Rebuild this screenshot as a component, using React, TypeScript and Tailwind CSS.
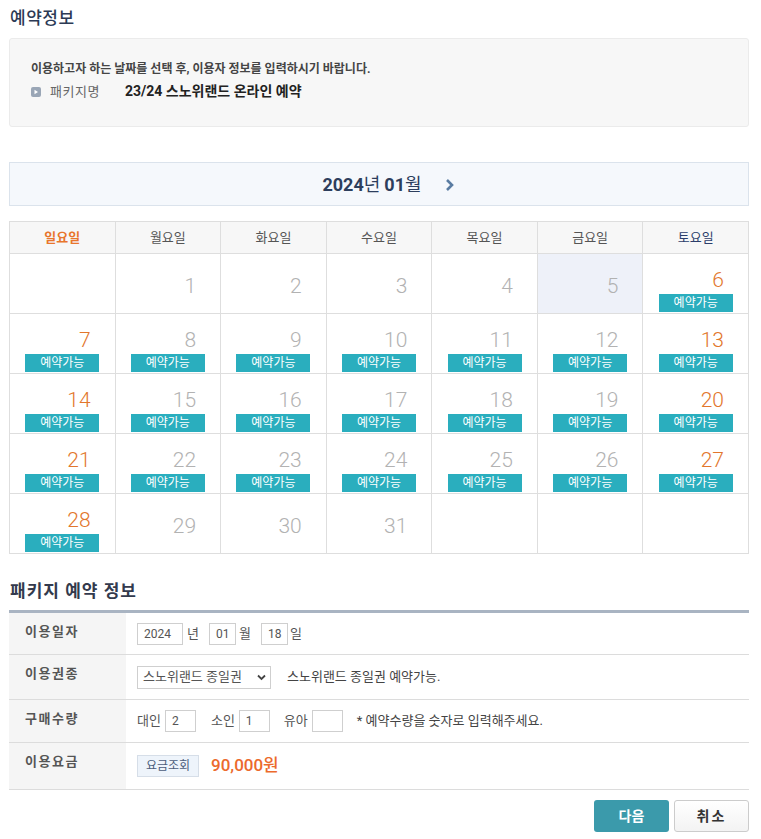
import React from 'react';

const FONT = "font-['Roboto','Noto_Sans_CJK_KR',sans-serif]";

const days = ['일요일', '월요일', '화요일', '수요일', '목요일', '금요일', '토요일'];

const weeks: (number | null)[][] = [
  [null, 1, 2, 3, 4, 5, 6],
  [7, 8, 9, 10, 11, 12, 13],
  [14, 15, 16, 17, 18, 19, 20],
  [21, 22, 23, 24, 25, 26, 27],
  [28, 29, 30, 31, null, null, null],
];

const isOpen = (d: number) => d >= 6 && d <= 28;

const DayCell: React.FC<{ day: number | null; col: number }> = ({ day, col }) => {
  const open = day !== null && isOpen(day);
  const weekend = col === 0 || col === 6;
  const bg = day === 5 ? 'bg-[#eef1f9]' : 'bg-white';
  return (
    <div className={`h-[60px] border-r border-b border-[#dedede] ${bg} flex flex-col ${open ? 'pt-[14px]' : 'pt-[20px]'}`}>
      {day !== null && (
        <div
          className={`text-right pr-[24px] text-[21px] leading-[24px] font-light ${
            open && weekend ? 'text-[#e2762c]' : 'text-[#b2b2b2]'
          }`}
        >
          {day}
        </div>
      )}
      {open && (
        <div className="mx-auto mt-[2px] w-[74px] h-[18px] bg-[#2aaebe] text-white text-[12px] leading-[18px] text-center">
          예약가능
        </div>
      )}
    </div>
  );
};

const Field: React.FC<{ w: string; value?: string }> = ({ w, value }) => (
  <div className={`${w} h-[22px] border border-[#cfcfcf] bg-white text-[12px] leading-[20px] text-[#555] pl-[6px]`}>
    {value}
  </div>
);

const Row: React.FC<{ label: string; h: string; children: React.ReactNode }> = ({ label, h, children }) => (
  <div className={`flex ${h} border-b border-[#dcdcdc]`}>
    <div className="w-[117px] shrink-0 bg-[#f5f5f5] pl-[16px] pt-[9px] text-[13px] font-bold text-[#555] tracking-[1.5px]">
      {label}
    </div>
    <div className="flex items-center pl-[11px] text-[13px] text-[#555]">{children}</div>
  </div>
);

const App: React.FC = () => {
  return (
    <div className={`${FONT} w-[761px] h-[839px] bg-white text-[#333] pl-[9px] overflow-hidden`}>
      <h2 className="pt-[6px] pl-[1px] text-[17px] leading-[24px] font-medium text-[#2c3a55] tracking-[0.5px]">예약정보</h2>

      <div className="mt-[8px] w-[740px] h-[89px] bg-[#f7f7f7] border border-[#ebebeb] rounded-[3px] pl-[21px] pt-[21px]">
        <p className="text-[12px] leading-[18px] font-bold text-[#454545]">
          이용하고자 하는 날짜를 선택 후, 이용자 정보를 입력하시기 바랍니다.
        </p>
        <div className="flex items-center mt-[3px]">
          <svg width="10" height="10" viewBox="0 0 10 10" className="mr-[9px]">
            <rect x="0" y="0" width="10" height="10" rx="2" fill="#9aa6b6" />
            <path d="M3.5 2.8 L7 5 L3.5 7.2 Z" fill="#ffffff" />
          </svg>
          <span className="text-[13px] text-[#666] w-[75px] tracking-[0.5px]">패키지명</span>
          <span className="text-[14px] font-bold text-[#222]">23/24 스노위랜드 온라인 예약</span>
        </div>
      </div>

      <div className="mt-[35px] w-[740px] h-[44px] bg-[#f5f8fc] border border-[#dbe3ec] flex items-center justify-center">
        <div className="flex items-center text-[18px] text-[#2d3e5c] ml-[20px]">
          <span className="font-bold">2024</span>
          <span className="mr-[4px]">년</span>
          <span className="font-bold">01</span>
          <span>월</span>
          <svg width="12" height="14" viewBox="0 0 12 14" className="ml-[22px] mt-[2px]">
            <path d="M3 2 L8 7 L3 12" stroke="#5a7ca2" strokeWidth="2.6" fill="none" />
          </svg>
        </div>
      </div>

      <div className="mt-[15px] w-[740px] border-l border-t border-[#dedede] grid grid-cols-7">
        {days.map((d, i) => (
          <div
            key={d}
            className={`h-[32px] border-r border-b border-[#dedede] bg-[#f7f7f7] flex items-center justify-center text-[13px] ${
              i === 0 ? 'text-[#e8762d] font-bold' : i === 6 ? 'text-[#2c3e6b]' : 'text-[#555]'
            }`}
          >
            {d}
          </div>
        ))}
        {weeks.map((w, wi) =>
          w.map((d, ci) => <DayCell key={`${wi}-${ci}`} day={d} col={ci} />)
        )}
      </div>

      <h3 className="mt-[25px] pl-[1px] text-[17px] leading-[24px] font-bold text-[#333a4d] tracking-[1px]">
        패키지 예약 정보
      </h3>

      <div className="mt-[7px] w-[740px] border-t-[3px] border-[#a9b4c2]">
        <Row label="이용일자" h="h-[42px]">
          <Field w="w-[46px]" value="2024" />
          <span className="ml-[4px]">년</span>
          <Field w="w-[27px] ml-[10px]" value="01" />
          <span className="ml-[3px]">월</span>
          <Field w="w-[27px] ml-[10px]" value="18" />
          <span className="ml-[2px]">일</span>
        </Row>
        <Row label="이용권종" h="h-[45px]">
          <div className="w-[134px] h-[23px] border border-[#cfcfcf] bg-white flex items-center justify-between pl-[5px] pr-[4px] text-[13px] text-[#555]">
            <span>스노위랜드 종일권</span>
            <svg width="9" height="7" viewBox="0 0 9 7">
              <path d="M1 1.5 L4.5 5 L8 1.5" stroke="#444" strokeWidth="1.8" fill="none" />
            </svg>
          </div>
          <span className="ml-[16px] text-[#444]">스노위랜드 종일권 예약가능.</span>
        </Row>
        <Row label="구매수량" h="h-[43px]">
          <span>대인</span>
          <Field w="w-[31px] ml-[4px]" value="2" />
          <span className="ml-[15px]">소인</span>
          <Field w="w-[31px] ml-[4px]" value="1" />
          <span className="ml-[14px]">유아</span>
          <Field w="w-[31px] ml-[4px]" />
          <span className="ml-[14px] text-[#444]">* 예약수량을 숫자로 입력해주세요.</span>
        </Row>
        <Row label="이용요금" h="h-[47px]">
          <div className="w-[62px] h-[22px] border border-[#d6dee8] bg-[#eef4fb] text-[12px] leading-[20px] text-center text-[#4b5c7a]">
            요금조회
          </div>
          <span className="ml-[12px] text-[17px] font-medium text-[#ec6a2c]">90,000원</span>
        </Row>
      </div>

      <div className="w-[740px] mt-[10px] flex justify-end gap-[5px]">
        <button className="w-[75px] h-[32px] rounded-[3px] bg-[#3b9aab] text-white text-[14px] font-bold">다음</button>
        <button className="w-[75px] h-[32px] rounded-[3px] border border-[#cccccc] bg-gradient-to-b from-white to-[#f3f3f3] text-[#333] text-[14px] font-bold tracking-[2px]">
          취소
        </button>
      </div>
    </div>
  );
};

export default App;
